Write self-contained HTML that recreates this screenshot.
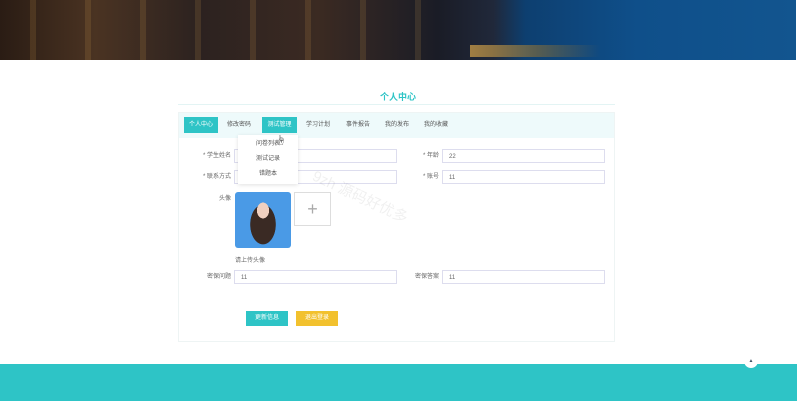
<!DOCTYPE html>
<html><head><meta charset="utf-8"><style>
*{margin:0;padding:0;box-sizing:border-box}
body{width:800px;height:401px;position:relative;background:#fff;font-family:"Liberation Sans","Noto Sans CJK SC",sans-serif;overflow:hidden;font-size:6px;color:#666}
.ab{position:absolute}
.banner{left:0;top:0;width:796px;height:60px;background:linear-gradient(90deg,#2a1c14 0%,#4a3322 12%,#2c2220 25%,#3b2a22 40%,#1a1c26 55%,#20283a 62%,#0d3f70 66%,#0f4f8a 80%,#12558f 100%)}
.tab{top:117px;height:16px;line-height:16px;text-align:center;font-size:6px;color:#555}
.act{background:#2ec4c6;color:#fff}
.in{height:14px;border:1px solid #dde;background:#fff;padding-left:6px;line-height:13px;font-size:6px;color:#666;padding-top:1px}
.lb{font-size:6px;color:#666;text-align:right;line-height:14px}
</style></head><body>
<div class="ab banner"></div>
<div class="ab" style="left:0;top:0;width:470px;height:60px;background:repeating-linear-gradient(90deg,transparent 0 30px,rgba(255,190,90,.12) 30px 36px,transparent 36px 55px);"></div>
<div class="ab" style="left:470px;top:45px;width:130px;height:12px;background:linear-gradient(90deg,#d9a54a,#7a6a40,transparent);opacity:.7"></div>
<div class="ab" style="left:0;top:90px;width:796px;text-align:center;font-size:9px;font-weight:bold;color:#2ec4c6">个人中心</div>
<div class="ab" style="left:178px;top:104px;width:437px;height:1px;background:#e3f4f4"></div>
<div class="ab" style="left:178px;top:112px;width:437px;height:230px;border:1px solid #eef4f4;background:#fff"></div>
<div class="ab" style="left:179px;top:113px;width:435px;height:25px;background:#eefafb"></div>
<div class="ab tab act" style="left:184px;width:34px">个人中心</div>
<div class="ab tab" style="left:222px;width:34px">修改密码</div>
<div class="ab tab act" style="left:262px;width:35px">测试管理</div>
<div class="ab tab" style="left:301px;width:34px">学习计划</div>
<div class="ab tab" style="left:341px;width:34px">事件报告</div>
<div class="ab tab" style="left:380px;width:34px">我的发布</div>
<div class="ab tab" style="left:419px;width:34px">我的收藏</div>

<div class="ab lb" style="left:195px;top:149px;width:36px">* 学生姓名</div>
<div class="ab in" style="left:234px;top:149px;width:163px"></div>
<div class="ab lb" style="left:405px;top:149px;width:34px">* 年龄</div>
<div class="ab in" style="left:442px;top:149px;width:163px">22</div>
<div class="ab lb" style="left:195px;top:170px;width:36px">* 联系方式</div>
<div class="ab in" style="left:234px;top:170px;width:163px"></div>
<div class="ab lb" style="left:405px;top:170px;width:34px">* 账号</div>
<div class="ab in" style="left:442px;top:170px;width:163px">11</div>

<div class="ab" style="left:238px;top:135px;width:60px;height:49px;background:#fff;box-shadow:0 1px 4px rgba(0,0,0,.12);text-align:center;font-size:6px;color:#555;line-height:15px;padding-top:2px">
<div>问卷列表</div><div>测试记录</div><div>错题本</div></div>
<div class="ab" style="left:276px;top:132px;font-size:10px;color:#333">☝</div>

<div class="ab lb" style="left:200px;top:192px;width:31px">头像</div>
<div class="ab" style="left:235px;top:192px;width:56px;height:56px;border-radius:3px;background:radial-gradient(ellipse 10px 13px at 50% 33%,#f0d0c0 0 60%,transparent 62%),radial-gradient(ellipse 18px 28px at 50% 58%,#3a2a24 0 70%,transparent 72%),#4a9ae6"></div>
<div class="ab" style="left:294px;top:192px;width:37px;height:34px;border:1px solid #ddd;text-align:center;line-height:32px;font-size:18px;color:#aaa;font-weight:200">+</div>
<div class="ab" style="left:235px;top:255px;font-size:6px;color:#666">请上传头像</div>

<div class="ab lb" style="left:195px;top:270px;width:36px">密保问题</div>
<div class="ab in" style="left:234px;top:270px;width:163px">11</div>
<div class="ab lb" style="left:405px;top:270px;width:34px">密保答案</div>
<div class="ab in" style="left:442px;top:270px;width:163px">11</div>

<div class="ab" style="left:246px;top:311px;width:42px;height:15px;background:#2ec4c6;color:#fff;text-align:center;line-height:15px;font-size:6px">更新信息</div>
<div class="ab" style="left:296px;top:311px;width:42px;height:15px;background:#f2c12e;color:#fff;text-align:center;line-height:15px;font-size:6px">退出登录</div>

<div class="ab" style="left:318px;top:165px;font-size:15px;color:rgba(0,0,0,.06);transform:rotate(25deg);transform-origin:left top">9zh 源码好优多</div>

<div class="ab" style="left:0;top:364px;width:797px;height:37px;background:#2ec4c6"></div>
<div class="ab" style="left:744px;top:354px;width:14px;height:14px;border-radius:50%;background:#fff;text-align:center;font-size:5px;line-height:14px;color:#456">▲</div>
</body></html>
